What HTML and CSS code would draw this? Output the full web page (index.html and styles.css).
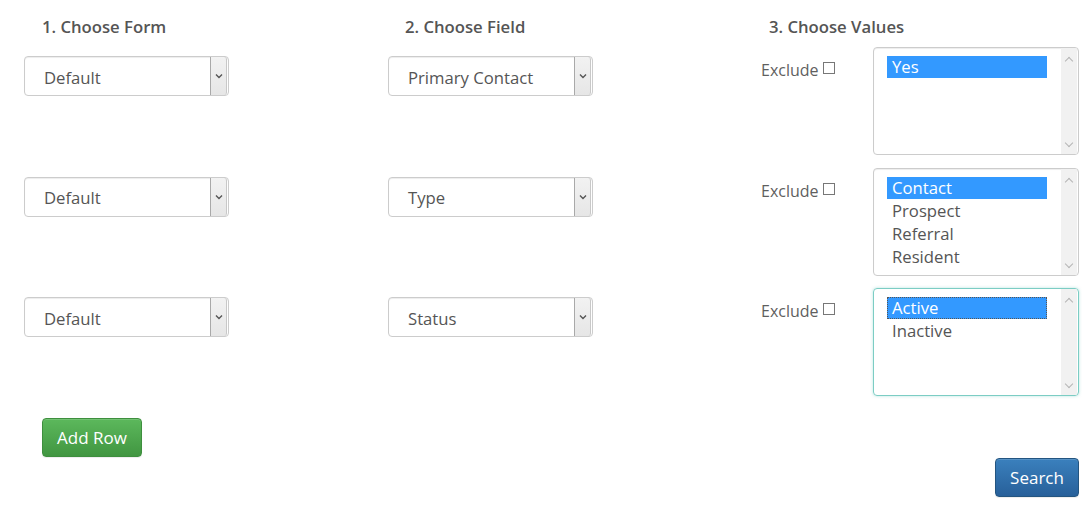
FILE: index.html
```html
<!DOCTYPE html>
<html>
<head>
<meta charset="utf-8">
<link rel="stylesheet" href="styles.css">
</head>
<body>
<div class="page">
  <div class="grid heads">
    <div class="head h1">1. Choose Form</div>
    <div class="head h2">2. Choose Field</div>
    <div class="head h3">3. Choose Values</div>
  </div>
  <div class="rows">
    <div class="grid row">
      <div class="cell"><div class="sel"><span class="val">Default</span><span class="arrow"><svg width="8" height="6" viewBox="0 0 8 6"><path d="M1 1.5 L4 4.5 L7 1.5" fill="none" stroke="#555" stroke-width="1.4"/></svg></span></div></div>
      <div class="cell"><div class="sel"><span class="val">Primary Contact</span><span class="arrow"><svg width="8" height="6" viewBox="0 0 8 6"><path d="M1 1.5 L4 4.5 L7 1.5" fill="none" stroke="#555" stroke-width="1.4"/></svg></span></div></div>
      <div class="cell vals">
        <div class="excl">Exclude <span class="cb"></span></div>
        <div class="list">
          <div class="opts">
            <div class="opt on">Yes</div>
          </div>
          <div class="sb"><span class="up"></span><span class="dn"></span></div>
        </div>
      </div>
    </div>
    <div class="grid row">
      <div class="cell"><div class="sel"><span class="val">Default</span><span class="arrow"><svg width="8" height="6" viewBox="0 0 8 6"><path d="M1 1.5 L4 4.5 L7 1.5" fill="none" stroke="#555" stroke-width="1.4"/></svg></span></div></div>
      <div class="cell"><div class="sel"><span class="val">Type</span><span class="arrow"><svg width="8" height="6" viewBox="0 0 8 6"><path d="M1 1.5 L4 4.5 L7 1.5" fill="none" stroke="#555" stroke-width="1.4"/></svg></span></div></div>
      <div class="cell vals">
        <div class="excl">Exclude <span class="cb"></span></div>
        <div class="list">
          <div class="opts">
            <div class="opt on">Contact</div>
            <div class="opt">Prospect</div>
            <div class="opt">Referral</div>
            <div class="opt">Resident</div>
          </div>
          <div class="sb"><span class="up"></span><span class="dn"></span></div>
        </div>
      </div>
    </div>
    <div class="grid row">
      <div class="cell"><div class="sel"><span class="val">Default</span><span class="arrow"><svg width="8" height="6" viewBox="0 0 8 6"><path d="M1 1.5 L4 4.5 L7 1.5" fill="none" stroke="#555" stroke-width="1.4"/></svg></span></div></div>
      <div class="cell"><div class="sel"><span class="val">Status</span><span class="arrow"><svg width="8" height="6" viewBox="0 0 8 6"><path d="M1 1.5 L4 4.5 L7 1.5" fill="none" stroke="#555" stroke-width="1.4"/></svg></span></div></div>
      <div class="cell vals">
        <div class="excl">Exclude <span class="cb"></span></div>
        <div class="list focus">
          <div class="opts">
            <div class="opt on dotted">Active</div>
            <div class="opt">Inactive</div>
          </div>
          <div class="sb"><span class="up"></span><span class="dn"></span></div>
        </div>
      </div>
    </div>
  </div>
  <div class="actions">
    <button class="btn green">Add Row</button>
    <div class="right"><button class="btn blue">Search</button></div>
  </div>
</div>
</body>
</html>
```
FILE: styles.css
```css
* { box-sizing: border-box; }
html, body { margin: 0; padding: 0; background: #fff; }
body { font-family: "Open Sans", "Noto Sans", sans-serif; color: #555; }
.page { width: 1087px; height: 509px; padding: 17px 0 0 24px; }
.grid { display: grid; grid-template-columns: 364px 373px 318px; }
.head { font-size: 16.7px; font-weight: 600; line-height: 20px; color: #555; }
.h1 { padding-left: 18px; }
.h2 { padding-left: 17px; }
.h3 { padding-left: 8px; }
.rows { margin-top: 10px; display: flex; flex-direction: column; gap: 12.5px; }
.row { height: 108px; }
.sel {
  margin-top: 9px; width: 205px; height: 40px; border: 1px solid #ccc; border-radius: 4px;
  box-shadow: inset 0 1px 1px rgba(0,0,0,.075);
  display: flex; align-items: center; justify-content: space-between; padding: 0 1px 0 19px;
  font-size: 16.7px; color: #555;
}
.val { padding-top: 2px; }
.arrow {
  width: 17px; height: 38px; background: linear-gradient(#f2f2f2, #e6e6e6);
  border-left: 1px solid #a9a9a9; border-right: 1px solid #c8c8c8; border-radius: 0 3px 3px 0;
  display: flex; align-items: center; justify-content: center;
}
.vals { display: flex; }
.excl { width: 112px; margin-top: 12px; font-size: 16px; line-height: 22px; color: #5f5f5f; display: flex; align-items: center; gap: 4px; height: 22px; }
.cb { width: 12px; height: 12px; border: 1px solid #777; display: inline-block; margin-top: -4px; }
.list {
  width: 206px; height: 108px; border: 1px solid #ccc; border-radius: 4px; display: flex;
  box-shadow: inset 0 1px 1px rgba(0,0,0,.075); overflow: hidden;
}
.list.focus { border-color: #7ccdc4; box-shadow: 0 0 3px rgba(102,200,190,.5); }
.opts { flex: 1; padding: 8px 0 0 13px; }
.opt { width: 160px; height: 23px; line-height: 22px; font-size: 16.7px; padding-left: 5px; color: #555; }
.opt.on { background: #3399ff; color: #fff; height: 22px; line-height: 22px; margin-bottom: 1px; }
.opt.dotted { outline: 1px dotted #555; outline-offset: -1px; }
.sb { width: 16px; margin-right: 1px; background: #f1f1f1; display: flex; flex-direction: column; justify-content: space-between; align-items: center; padding: 8px 0 6px; }
.up, .dn { width: 6px; height: 6px; border-left: 1.4px solid #b5b5b5; border-top: 1.4px solid #b5b5b5; }
.up { transform: rotate(45deg); margin-top: 2px; }
.dn { transform: rotate(225deg); margin-bottom: 2px; }
.actions { margin-top: 22px; padding-left: 18px; width: 1055px; }
.btn {
  font-family: "Open Sans", "Noto Sans", sans-serif; font-size: 17px; color: #fff; height: 39px;
  border-radius: 4px; border: 1px solid; cursor: pointer; padding: 0;
  box-shadow: inset 0 1px 0 rgba(255,255,255,.15), 0 1px 1px rgba(0,0,0,.075);
}
.green { width: 100px; background: linear-gradient(#5cb85c, #419641); border-color: #3e8f3e; }
.blue { width: 84px; background: linear-gradient(#3a80bd, #28609a); border-color: #245580; }
.right { display: flex; justify-content: flex-end; margin-top: 1px; }
```
